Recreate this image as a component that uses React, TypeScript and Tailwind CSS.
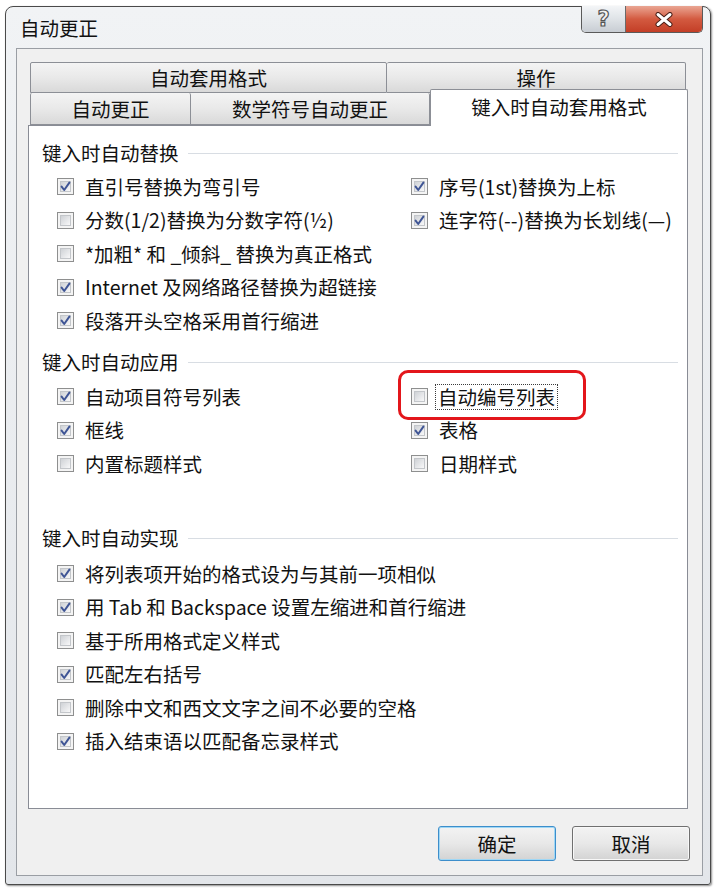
import React from "react";

function Check({ checked }: { checked: boolean }) {
  return (
    <div className="relative w-[17px] h-[17px] shrink-0 border border-[#8e8f8f] bg-[#f4f4f4] p-[2px]">
      <div className="w-full h-full border border-[#c3c6ca] bg-gradient-to-br from-[#cfd2d6] to-[#f8f8f9]" />
      {checked && (
        <svg className="absolute left-0 top-0" width="15" height="15" viewBox="0 0 15 15">
          <path d="M3.6 7.6 L6.2 11 L11.4 3.6" fill="none" stroke="#3f5595" strokeWidth="2" strokeLinejoin="round" strokeLinecap="round" />
        </svg>
      )}
    </div>
  );
}

function Item({ checked, label }: { checked: boolean; label: string }) {
  return (
    <div className="flex items-center">
      <Check checked={checked} />
      <span className="ml-[11px] leading-[24px] whitespace-nowrap">{label}</span>
    </div>
  );
}

function Row({ children, right }: { children: React.ReactNode; right?: React.ReactNode }) {
  return (
    <div className="h-[33.5px] flex items-center">
      <div className="w-[354px] shrink-0 flex items-center">{children}</div>
      {right}
    </div>
  );
}

function Heading({ text, className = "" }: { text: string; className?: string }) {
  return (
    <div className={"h-[24px] flex items-center pl-[13px] pr-[9px] " + className}>
      <span className="leading-[24px] whitespace-nowrap">{text}</span>
      <div className="ml-[9px] flex-1 h-px bg-[#d8dde3]" />
    </div>
  );
}

const tabBase =
  "h-full flex items-center justify-center border border-[#8c8f96] rounded-t-[2px] bg-gradient-to-b from-[#f4f4f4] via-[#e9e9e9] to-[#d9d9d9] leading-[24px]";

export default function App() {
  return (
    <div className="w-[720px] h-[892px] bg-white pt-[6px] pl-[5px] font-['Noto_Sans_CJK_SC',sans-serif] text-[19.5px] text-[#111]">
      <div className="w-[706px] h-[879px] border border-[#4a4a4a] rounded-t-[8px] rounded-b-[3px] bg-gradient-to-b from-[#f1f3f5] to-[#e3e6ea] flex flex-col shadow-[1px_1px_2px_rgba(0,0,0,0.45)]">
        {/* Title bar */}
        <div className="h-[41px] shrink-0 flex items-start justify-between pl-[14px] pr-[7px]">
          <div className="mt-[9px] leading-[24px] text-[#111]">自动更正</div>
          <div className="flex h-[27px] -mt-[1px] border border-[#5a5a5a] border-t-0 rounded-b-[5px] overflow-hidden">
            <div className="w-[44px] h-full flex items-center justify-center bg-gradient-to-b from-[#f3f5f7] via-[#dfe3e7] to-[#c8cdd3] border-r border-[#6a6a6a]">
              <span className="font-['DejaVu_Sans',sans-serif] font-bold text-[21px] leading-none text-[#f2f2f2] [-webkit-text-stroke:1.2px_#555]">?</span>
            </div>
            <div className="w-[76px] h-full flex items-center justify-center bg-gradient-to-b from-[#e9a593] via-[#d35a40] to-[#c33e26]">
              <svg width="18" height="15" viewBox="0 0 18 15">
                <path d="M3 2.5 L15 12.5 M15 2.5 L3 12.5" stroke="#4a2018" strokeWidth="5" strokeLinecap="round" fill="none" />
                <path d="M3 2.5 L15 12.5 M15 2.5 L3 12.5" stroke="#ffffff" strokeWidth="3" strokeLinecap="round" fill="none" />
              </svg>
            </div>
          </div>
        </div>

        {/* Client area */}
        <div className="flex-1 ml-[10px] mr-[7px] mb-[8px] border border-[#9a9ea4] bg-[#f0f0f0] pt-[13px] pl-[11px] flex flex-col">
          {/* Tab control */}
          <div className="w-[660px] flex flex-col">
            <div className="h-[31px] flex pl-[2px]">
              <div className={tabBase + " w-[357px]"}>自动套用格式</div>
              <div className={tabBase + " w-[299px] border-l-0"}>操作</div>
            </div>
            <div className="h-[32px] flex items-end pl-[2px]">
              <div className={tabBase + " w-[161px] h-[32px] border-t-0"}>自动更正</div>
              <div className={tabBase + " w-[239px] h-[32px] border-t-0 border-l-0"}>数学符号自动更正</div>
              <div className="relative z-10 w-[258px] h-[37px] -mb-[1px] flex items-center justify-center border border-b-0 border-[#8c8f96] rounded-t-[2px] bg-white leading-[24px] pb-[2px]">
                键入时自动套用格式
              </div>
            </div>
            <div className="relative h-[684px] border border-[#898c95] bg-white pt-[15px]">
              <Heading text="键入时自动替换" />
              <div className="mt-[5px] pl-[28px]">
                <Row right={<Item checked label="序号(1st)替换为上标" />}>
                  <Item checked label="直引号替换为弯引号" />
                </Row>
                <Row right={<Item checked label="连字符(--)替换为长划线(—)" />}>
                  <Item checked={false} label="分数(1/2)替换为分数字符(½)" />
                </Row>
                <Row>
                  <Item checked={false} label="*加粗* 和 _倾斜_ 替换为真正格式" />
                </Row>
                <Row>
                  <Item checked label="Internet 及网络路径替换为超链接" />
                </Row>
                <Row>
                  <Item checked label="段落开头空格采用首行缩进" />
                </Row>
              </div>

              <Heading text="键入时自动应用" className="mt-[12.5px]" />
              <div className="mt-[6px] pl-[28px]">
                <Row
                  right={
                    <div className="relative flex items-center">
                      <Check checked={false} />
                      <span className="ml-[7px] px-[2px] border border-dotted border-[#3a3a3a] leading-[24px] whitespace-nowrap">
                        自动编号列表
                      </span>
                      <div className="absolute left-[-13px] top-[-14px] w-[188px] h-[50px] border-[3px] border-[#e3161b] rounded-[10px]" />
                    </div>
                  }
                >
                  <Item checked label="自动项目符号列表" />
                </Row>
                <Row right={<Item checked label="表格" />}>
                  <Item checked label="框线" />
                </Row>
                <Row right={<Item checked={false} label="日期样式" />}>
                  <Item checked={false} label="内置标题样式" />
                </Row>
              </div>

              <Heading text="键入时自动实现" className="mt-[45.5px]" />
              <div className="mt-[7px] pl-[28px]">
                <Row>
                  <Item checked label="将列表项开始的格式设为与其前一项相似" />
                </Row>
                <Row>
                  <Item checked label="用 Tab 和 Backspace 设置左缩进和首行缩进" />
                </Row>
                <Row>
                  <Item checked={false} label="基于所用格式定义样式" />
                </Row>
                <Row>
                  <Item checked label="匹配左右括号" />
                </Row>
                <Row>
                  <Item checked={false} label="删除中文和西文文字之间不必要的空格" />
                </Row>
                <Row>
                  <Item checked label="插入结束语以匹配备忘录样式" />
                </Row>
              </div>
            </div>
          </div>

          {/* Buttons */}
          <div className="mt-[17px] flex justify-end gap-[16px] pr-[12px]">
            <div className="w-[118px] h-[35px] rounded-[3px] border border-[#3d8ecb] shadow-[inset_0_0_0_1px_#9fd7f5] bg-gradient-to-b from-[#f3f3f3] via-[#e8e8e8] to-[#d3d3d3] flex items-center justify-center leading-[24px]">
              确定
            </div>
            <div className="w-[118px] h-[35px] rounded-[3px] border border-[#707070] shadow-[inset_0_0_0_1px_#f8f8f8] bg-gradient-to-b from-[#f3f3f3] via-[#e8e8e8] to-[#d3d3d3] flex items-center justify-center leading-[24px]">
              取消
            </div>
          </div>
        </div>
      </div>
    </div>
  );
}
